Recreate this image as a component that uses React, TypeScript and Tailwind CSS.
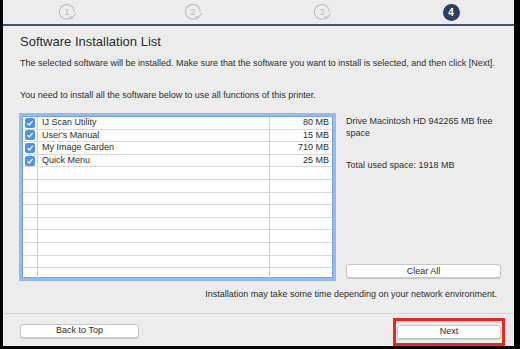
import React from 'react';

const rows = [
  { name: 'IJ Scan Utility', size: '80 MB' },
  { name: "User's Manual", size: '15 MB' },
  { name: 'My Image Garden', size: '710 MB' },
  { name: 'Quick Menu', size: '25 MB' },
];

function Step({ n, active }: { n: number; active?: boolean }) {
  if (active) {
    return (
      <div className="w-[17px] h-[17px] rounded-full bg-[#2d3f5e] text-white text-[10px] font-bold flex items-center justify-center">
        {n}
      </div>
    );
  }
  return (
    <svg width="20" height="18" viewBox="0 0 20 18">
      <path d="M14.2 13.8 A7.4 7.4 0 1 1 16.2 9" fill="none" stroke="#c2c2c2" strokeWidth="1.2" />
      <path d="M11.5 13 l2.2 2.3 l4.2 -5" fill="none" stroke="#c2c2c2" strokeWidth="1.2" />
      <text x="9" y="12.3" fontSize="9.5" textAnchor="middle" fill="#bcbcbc" fontFamily="Liberation Sans">
        {n}
      </text>
    </svg>
  );
}

function Checkbox() {
  return (
    <div className="w-[10px] h-[10px] rounded-[2px] bg-[#4a93ee] flex items-center justify-center">
      <svg width="8" height="8" viewBox="0 0 8 8">
        <path d="M1.5 4.2 L3.3 6 L6.7 1.8" fill="none" stroke="white" strokeWidth="1.3" />
      </svg>
    </div>
  );
}

function Cols() {
  return (
    <>
      <div className="w-[15px] border-r border-[#cfcfcf]" />
      <div className="flex-1" />
      <div className="w-[63px] border-l border-[#cfcfcf]" />
    </>
  );
}

export default function App() {
  const empty = Array.from({ length: 9 });
  return (
    <div className="w-[520px] h-[349px] bg-black pl-[3px] pr-[6px] pb-[3px] overflow-hidden" style={{ fontFamily: '"Liberation Sans", Arial, sans-serif' }}>
      <div className="h-full bg-[#ececec] flex flex-col text-[#2e2e2e]">
        {/* steps header */}
        <div className="h-[26px] border-b-2 border-[#3e5273] flex items-center shrink-0">
          <div className="w-[127px] flex justify-center pl-[4px]"><Step n={1} /></div>
          <div className="w-[131px] flex justify-center"><Step n={2} /></div>
          <div className="w-[131px] flex justify-center"><Step n={3} /></div>
          <div className="w-[127px] flex justify-center"><Step n={4} active /></div>
        </div>

        <div className="pl-[16px] pr-[17px] pt-[9px] flex-1 flex flex-col">
          <div className="text-[13px] leading-[14px] pl-[1px]">Software Installation List</div>
          <div className="text-[9px] leading-[11px] mt-[9px] pl-[1px] whitespace-nowrap">
            The selected software will be installed. Make sure that the software you want to install is selected, and then click [Next].
          </div>
          <div className="text-[9px] leading-[11px] mt-[21px] pl-[1px]">
            You need to install all the software below to use all functions of this printer.
          </div>

          <div className="flex mt-[12px] gap-[10px]">
            <div className="w-[317px] h-[168px] border-[3px] border-[#93bbeb] bg-white overflow-hidden shrink-0">
              <div className="h-full border border-[#7aa3da] flex flex-col">
                {rows.map((r) => (
                  <div key={r.name} className="h-[12.6px] flex border-b border-[#dadada] shrink-0 text-[9px]">
                    <div className="w-[15px] border-r border-[#cfcfcf] flex items-center justify-center">
                      <Checkbox />
                    </div>
                    <div className="flex-1 pl-[4px] flex items-center">{r.name}</div>
                    <div className="w-[63px] border-l border-[#cfcfcf] pr-[3px] flex items-center justify-end">{r.size}</div>
                  </div>
                ))}
                {empty.map((_, i) => (
                  <div key={i} className="h-[12.6px] flex border-b border-[#dadada] shrink-0">
                    <Cols />
                  </div>
                ))}
                <div className="flex-1 flex">
                  <Cols />
                </div>
              </div>
            </div>

            <div className="flex-1 flex flex-col text-[9px] leading-[12px] pt-[2px]">
              <div>Drive Macintosh HD 942265 MB free<br />space</div>
              <div className="mt-[20px]">Total used space: 1918 MB</div>
              <div className="mt-auto mb-[3px]">
                <button className="w-[155px] h-[14px] bg-white rounded-[3px] border border-[#c8c8c8] shadow-[0_1px_1px_rgba(0,0,0,0.15)] text-[9px] flex items-center justify-center">
                  Clear All
                </button>
              </div>
            </div>
          </div>

          <div className="text-[9px] leading-[11px] mt-[8px] text-right">
            Installation may take some time depending on your network environment.
          </div>
        </div>

        <div className="border-t border-[#d4d4d4] h-[33px] shrink-0 flex items-start justify-between pl-[17px] pr-[9px]">
          <button className="w-[119px] h-[14px] mt-[10px] bg-white rounded-[3px] border border-[#c8c8c8] shadow-[0_1px_1px_rgba(0,0,0,0.15)] text-[9px] flex items-center justify-center">
            Back to Top
          </button>
          <div className="border-[3px] border-[#e8271d] py-[4px] px-[1px] mt-[4px]">
            <button className="w-[104px] h-[14px] bg-white rounded-[3px] border border-[#c8c8c8] shadow-[0_1px_1px_rgba(0,0,0,0.15)] text-[9px] flex items-center justify-center">
              Next
            </button>
          </div>
        </div>
      </div>
    </div>
  );
}
